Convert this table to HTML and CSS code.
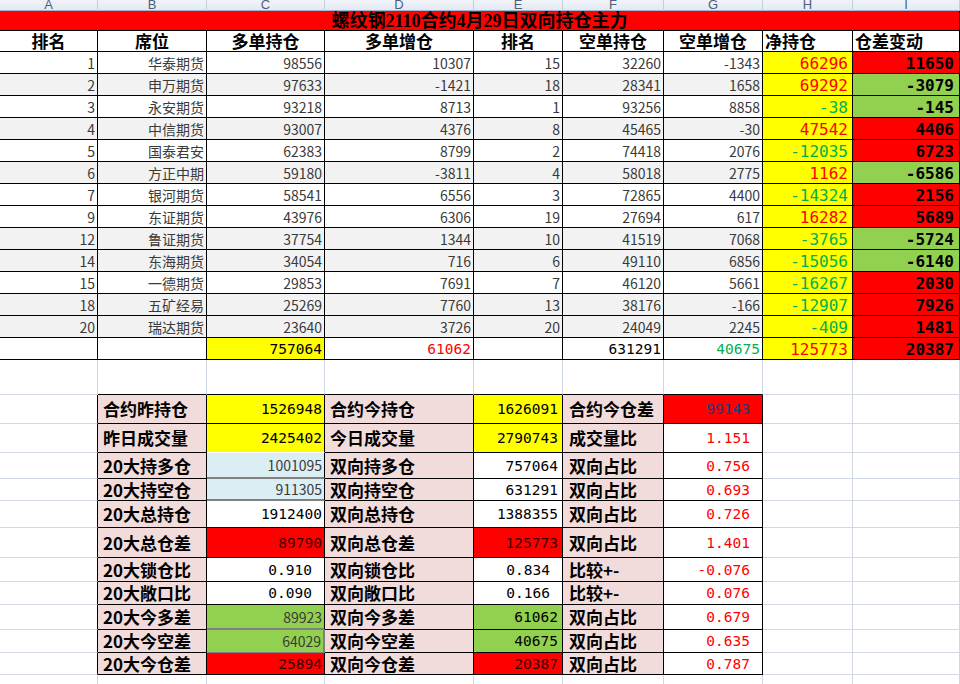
FILE: index.html
```html
<!DOCTYPE html>
<html lang="zh-CN">
<head>
<meta charset="utf-8">
<title>螺纹钢2110合约4月29日双向持仓主力</title>
<link rel="stylesheet" href="styles.css">
</head>
<body>
<div class="sheet">
  <!-- column letters -->
  <div class="c hd">A</div><div class="c hd">B</div><div class="c hd">C</div><div class="c hd">D</div><div class="c hd">E</div><div class="c hd">F</div><div class="c hd">G</div><div class="c hd">H</div><div class="c hd">I</div>

  <!-- title -->
  <div class="c k title">螺纹钢2110合约4月29日双向持仓主力</div>

  <!-- header -->
  <div class="c k th ctr">排名</div><div class="c k th ctr">席位</div><div class="c k th ctr">多单持仓</div><div class="c k th ctr">多单增仓</div><div class="c k th ctr">排名</div><div class="c k th ctr">空单持仓</div><div class="c k th ctr">空单增仓</div><div class="c k th lft">净持仓</div><div class="c k th lft">仓差变动</div>

  <!-- data rows -->
  <div class="c k t">1</div><div class="c k t">华泰期货</div><div class="c k t">98556</div><div class="c k t">10307</div><div class="c k t">15</div><div class="c k t">32260</div><div class="c k t">-1343</div><div class="c k y hn tr">66296</div><div class="c k rd ik">11650</div>
  <div class="c k t gy">2</div><div class="c k t gy">申万期货</div><div class="c k t gy">97633</div><div class="c k t gy">-1421</div><div class="c k t gy">18</div><div class="c k t gy">28341</div><div class="c k t gy">1658</div><div class="c k y hn tr">69292</div><div class="c k gn ik">-3079</div>
  <div class="c k t">3</div><div class="c k t">永安期货</div><div class="c k t">93218</div><div class="c k t">8713</div><div class="c k t">1</div><div class="c k t">93256</div><div class="c k t">8858</div><div class="c k y hn tg">-38</div><div class="c k gn ik">-145</div>
  <div class="c k t gy">4</div><div class="c k t gy">中信期货</div><div class="c k t gy">93007</div><div class="c k t gy">4376</div><div class="c k t gy">8</div><div class="c k t gy">45465</div><div class="c k t gy">-30</div><div class="c k y hn tr">47542</div><div class="c k rd ik">4406</div>
  <div class="c k t">5</div><div class="c k t">国泰君安</div><div class="c k t">62383</div><div class="c k t">8799</div><div class="c k t">2</div><div class="c k t">74418</div><div class="c k t">2076</div><div class="c k y hn tg">-12035</div><div class="c k rd ik">6723</div>
  <div class="c k t gy">6</div><div class="c k t gy">方正中期</div><div class="c k t gy">59180</div><div class="c k t gy">-3811</div><div class="c k t gy">4</div><div class="c k t gy">58018</div><div class="c k t gy">2775</div><div class="c k y hn tr">1162</div><div class="c k gn ik">-6586</div>
  <div class="c k t">7</div><div class="c k t">银河期货</div><div class="c k t">58541</div><div class="c k t">6556</div><div class="c k t">3</div><div class="c k t">72865</div><div class="c k t">4400</div><div class="c k y hn tg">-14324</div><div class="c k rd ik">2156</div>
  <div class="c k t">9</div><div class="c k t">东证期货</div><div class="c k t">43976</div><div class="c k t">6306</div><div class="c k t">19</div><div class="c k t">27694</div><div class="c k t">617</div><div class="c k y hn tr">16282</div><div class="c k rd ik">5689</div>
  <div class="c k t gy">12</div><div class="c k t gy">鲁证期货</div><div class="c k t gy">37754</div><div class="c k t gy">1344</div><div class="c k t gy">10</div><div class="c k t gy">41519</div><div class="c k t gy">7068</div><div class="c k y hn tg">-3765</div><div class="c k gn ik">-5724</div>
  <div class="c k t gy">14</div><div class="c k t gy">东海期货</div><div class="c k t gy">34054</div><div class="c k t gy">716</div><div class="c k t gy">6</div><div class="c k t gy">49110</div><div class="c k t gy">6856</div><div class="c k y hn tg">-15056</div><div class="c k gn ik">-6140</div>
  <div class="c k t">15</div><div class="c k t">一德期货</div><div class="c k t">29853</div><div class="c k t">7691</div><div class="c k t">7</div><div class="c k t">46120</div><div class="c k t">5661</div><div class="c k y hn tg">-16267</div><div class="c k rd ik">2030</div>
  <div class="c k t gy">18</div><div class="c k t gy">五矿经易</div><div class="c k t gy">25269</div><div class="c k t gy">7760</div><div class="c k t gy">13</div><div class="c k t gy">38176</div><div class="c k t gy">-166</div><div class="c k y hn tg">-12907</div><div class="c k rd ik">7926</div>
  <div class="c k t gy">20</div><div class="c k t gy">瑞达期货</div><div class="c k t gy">23640</div><div class="c k t gy">3726</div><div class="c k t gy">20</div><div class="c k t gy">24049</div><div class="c k t gy">2245</div><div class="c k y hn tg">-409</div><div class="c k rd ik">1481</div>

  <!-- totals -->
  <div class="c k"></div><div class="c k"></div><div class="c k y m">757064</div><div class="c k m tr">61062</div><div class="c k"></div><div class="c k m">631291</div><div class="c k m tg">40675</div><div class="c k y hn tr">125773</div><div class="c k rd ik">20387</div>

  <!-- empty row -->
  <div class="c"></div><div class="c kb"></div><div class="c kb"></div><div class="c kb"></div><div class="c kb"></div><div class="c kb"></div><div class="c kb"></div><div class="c"></div><div class="c"></div>

  <!-- summary block -->
  <div class="c kr"></div><div class="c k pk lb">合约昨持仓</div><div class="c k y m">1526948</div><div class="c k pk lb">合约今持仓</div><div class="c k y m pe">1626091</div><div class="c k pk lb lf">合约今仓差</div><div class="c k rd m tn pd">99143</div><div class="c"></div><div class="c"></div>
  <div class="c kr"></div><div class="c k pk lb">昨日成交量</div><div class="c k y m wb">2425402</div><div class="c k pk lb">今日成交量</div><div class="c k y m pe">2790743</div><div class="c k pk lb lf">成交量比</div><div class="c k m tr pd">1.151</div><div class="c"></div><div class="c"></div>
  <div class="c kr"></div><div class="c k pk lb">20大持多仓</div><div class="c k lbg t gb">1001095</div><div class="c k pk lb">双向持多仓</div><div class="c k m pe">757064</div><div class="c k pk lb lf">双向占比</div><div class="c k m tr pd">0.756</div><div class="c"></div><div class="c"></div>
  <div class="c kr"></div><div class="c k pk lb">20大持空仓</div><div class="c k lbg t gb">911305</div><div class="c k pk lb">双向持空仓</div><div class="c k m pe">631291</div><div class="c k pk lb lf">双向占比</div><div class="c k m tr pd">0.693</div><div class="c"></div><div class="c"></div>
  <div class="c kr"></div><div class="c k pk lb">20大总持仓</div><div class="c k m">1912400</div><div class="c k pk lb">双向总持仓</div><div class="c k m pe">1388355</div><div class="c k pk lb lf">双向占比</div><div class="c k m tr pd">0.726</div><div class="c"></div><div class="c"></div>
  <div class="c kr"></div><div class="c k pk lb">20大总仓差</div><div class="c k rd m td">89790</div><div class="c k pk lb">双向总仓差</div><div class="c k rd m td pe">125773</div><div class="c k pk lb lf">双向占比</div><div class="c k m tr pd">1.401</div><div class="c"></div><div class="c"></div>
  <div class="c kr"></div><div class="c k pk lb">20大锁仓比</div><div class="c k m pd">0.910</div><div class="c k pk lb">双向锁仓比</div><div class="c k m pd">0.834</div><div class="c k pk lb lf">比较+-</div><div class="c k m tr pd">-0.076</div><div class="c"></div><div class="c"></div>
  <div class="c kr"></div><div class="c k pk lb">20大敞口比</div><div class="c k m pd">0.090</div><div class="c k pk lb">双向敞口比</div><div class="c k m pd">0.166</div><div class="c k pk lb lf">比较+-</div><div class="c k m tr pd">0.076</div><div class="c"></div><div class="c"></div>
  <div class="c kr"></div><div class="c k pk lb">20大今多差</div><div class="c k gn t gb">89923</div><div class="c k pk lb">双向今多差</div><div class="c k gn m pe">61062</div><div class="c k pk lb lf">双向占比</div><div class="c k m tr pd">0.679</div><div class="c"></div><div class="c"></div>
  <div class="c kr"></div><div class="c k pk lb">20大今空差</div><div class="c k gn t gr">64029</div><div class="c k pk lb">双向今空差</div><div class="c k gn m pe">40675</div><div class="c k pk lb lf">双向占比</div><div class="c k m tr pd">0.635</div><div class="c"></div><div class="c"></div>
  <div class="c kr"></div><div class="c k pk lb">20大今仓差</div><div class="c k rd m td">25894</div><div class="c k pk lb">双向今仓差</div><div class="c k rd m td pe">20387</div><div class="c k pk lb lf">双向占比</div><div class="c k m tr pd">0.787</div><div class="c"></div><div class="c"></div>

  <!-- trailing row -->
  <div class="c"></div><div class="c"></div><div class="c"></div><div class="c"></div><div class="c"></div><div class="c"></div><div class="c"></div><div class="c"></div><div class="c"></div>
</div>
</body>
</html>
```

FILE: styles.css
```css
html, body {
  margin: 0;
  padding: 0;
  background: #ffffff;
}
body {
  width: 960px;
  height: 684px;
  overflow: hidden;
  font-family: "Noto Sans CJK SC", "Noto Sans", sans-serif;
}
.sheet {
  display: grid;
  grid-template-columns: 98px 109px 118px 149px 89px 101px 99px 90px 107px;
  grid-template-rows: 11px 20px 21px repeat(13, 22px) 22px 35px 29px 29px 26px 22px 27px 30px 24px 23px 25px 23px 22px 20px;
  width: 960px;
}
.c {
  box-sizing: border-box;
  border-right: 1px solid #d0d7e5;
  border-bottom: 1px solid #d0d7e5;
  display: flex;
  align-items: center;
  justify-content: flex-end;
  padding: 0 2px;
  overflow: hidden;
  white-space: nowrap;
  line-height: 1.2;
}
.k { border-right-color: #000; border-bottom-color: #000; }
.kr { border-right-color: #000; }
.kb { border-bottom-color: #000; }

/* column letter header */
.hd {
  justify-content: center;
  align-items: flex-end;
  background: linear-gradient(#f1f4f9, #e3e9f2);
  border-right-color: #c3cfdd;
  border-bottom-color: #9eb6ce;
  font-family: "Liberation Sans", sans-serif;
  font-size: 13px;
  line-height: 11px;
  color: #4d5f78;
  padding: 0;
}

.title {
  grid-column: 1 / -1;
  background: #ff0000;
  justify-content: center;
  align-items: center;
  font-family: "Liberation Serif", "Noto Sans CJK SC", serif;
  font-weight: 700;
  font-size: 18px;
  line-height: 19px;
  padding-top: 1px;
  color: #000;
}

.th {
  font-weight: 700;
  font-size: 17px;
  line-height: 1.1;
  color: #000;
  padding-top: 1px;
}
.ctr { justify-content: center; }
.lft { justify-content: flex-start; padding-left: 2px; }

.t { font-size: 14px; color: #3a3a3a; padding-top: 1px; }
.m { font-family: "DejaVu Sans Mono", "Liberation Mono", monospace; font-size: 14.5px; color: #000; padding-top: 2px; }
.hn { font-family: "DejaVu Sans Mono", "Liberation Mono", monospace; font-size: 16px; padding-right: 4px; padding-top: 2px; }
.ik { font-family: "DejaVu Sans Mono", "Liberation Mono", monospace; font-size: 16px; font-weight: 700; color: #000; padding-right: 5px; padding-top: 2px; }

.pe { padding-right: 4px; }
.pd { padding-right: 12px; }

.lb {
  justify-content: flex-start;
  padding-left: 5px;
  font-weight: 700;
  font-size: 17px;
  line-height: 1.1;
  color: #000;
  padding-top: 1px;
}
.lf { padding-left: 6px; }

/* fills */
.y { background: #ffff00; }
.rd { background: #ff0000; }
.gn { background: #92d050; }
.gy { background: #f2f2f2; }
.pk { background: #f2dcdb; }
.lbg { background: #dbeef4; }

/* text colours */
.tr { color: #ff0000; }
.tg { color: #00b050; }
.tn { color: #1f3a7a; }
.td { color: #3a0000; }

/* special borders */
.wb { border-bottom-color: #ffffff; }
.gb { border-bottom: 2px solid #808080; }
.gr { border-right: 2px solid #808080; border-bottom-color: #808080; }
```
